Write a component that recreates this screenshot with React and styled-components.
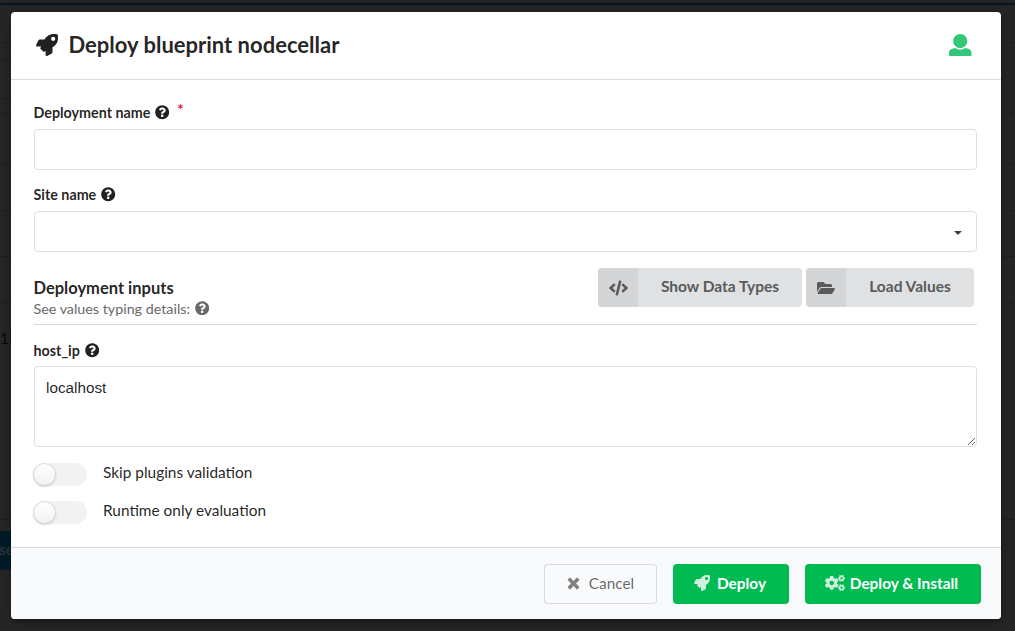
import React from "react";
import styled, { createGlobalStyle } from "styled-components";
import { FaQuestionCircle, FaFolderOpen, FaCogs } from "react-icons/fa";

const GlobalStyle = createGlobalStyle`
  *, *::before, *::after { box-sizing: border-box; }
  html, body { margin: 0; height: 100%; overflow: hidden; background: #242424; }
  body { font-family: Lato, "Open Sans", sans-serif; font-size: 15.4px; line-height: 21px; color: rgba(0,0,0,.87); }
`;

const Backdrop = styled.div`
  position: fixed;
  inset: 0;
  background: #262626;
  color: #060606;
`;
const TopBar = styled.div`
  height: 5px;
  background: #242424;
  border-bottom: 2px solid #03161e;
`;
const BackRow = styled.div`
  width: ${(p) => (p.$half ? "50%" : "100%")};
  height: ${(p) => p.$h}px;
  border-bottom: 1px solid #202020;
  line-height: 20px;
  padding-top: ${(p) => p.$top || 0}px;
`;
const BackButton = styled.div`
  width: 60px;
  height: 39px;
  margin-top: 11px;
  background: #001c28;
  color: #2b3438;
  font-weight: 700;
  line-height: 37px;
  text-indent: -1px;
`;

const Modal = styled.div`
  position: fixed;
  top: 12px;
  left: 11px;
  width: 990px;
  height: 607px;
  display: flex;
  flex-direction: column;
  background: #fff;
  border-radius: 4px;
  overflow: hidden;
  box-shadow: 1px 3px 3px 0 rgba(0,0,0,.2), 1px 3px 15px 2px rgba(0,0,0,.2);
`;
const Header = styled.header`
  height: 68px;
  display: flex;
  align-items: center;
  justify-content: space-between;
  padding: 0 29px 1px 25px;
  border-bottom: 1px solid #dbdcdd;
`;
const Title = styled.h1`
  display: flex;
  align-items: center;
  gap: 10.5px;
  margin: 0 0 1px;
  font-size: 22px;
  line-height: 27px;
  font-weight: 700;
`;
const Glyph = styled.svg`
  display: block;
  width: ${(p) => p.$w || p.$size}px;
  height: ${(p) => p.$size}px;
  fill: currentColor;
  opacity: ${(p) => p.$opacity || 1};
`;
const UserMark = styled.span`
  margin-right: 0.5px;
  color: #34c779;
`;
const Body = styled.main`
  flex: 1;
  padding: 21px 24px 0 23px;
`;
const Label = styled.label`
  display: flex;
  align-items: center;
  height: 23px;
  margin: 0 0 5px -0.5px;
  font-size: 14.3px;
  font-weight: 700;
  svg { margin-left: 5px; }
`;
const Required = styled.span`
  margin: -6px 0 0 7.5px;
  font-size: 15px;
  color: #e8123f;
`;
const Field = styled.div`
  height: 41px;
  margin-bottom: 13px;
  border: 1px solid #dededf;
  border-radius: 4px;
  display: flex;
  align-items: center;
  justify-content: flex-end;
  padding-right: 14.5px;
`;
const Caret = styled.span`
  border: 4.5px solid transparent;
  border-top-color: #404040;
  border-bottom: 0;
  margin-top: 2px;
`;
const InputsHeader = styled.section`
  display: flex;
  justify-content: space-between;
  height: 60px;
  padding: 3px 3px 0 0;
  margin-bottom: 14px;
  border-bottom: 1px solid #dbdcdd;
`;
const SectionTitle = styled.h2`
  margin: 10px 0 0 -0.5px;
  font-size: 16.5px;
  line-height: 21px;
  font-weight: 700;
`;
const Hint = styled.div`
  display: flex;
  align-items: center;
  gap: 5px;
  height: 20px;
  margin: -1px 0 0 -0.5px;
  font-size: 14.3px;
  color: #696969;
`;
const Tools = styled.div`
  display: flex;
  gap: 4px;
`;
const LabeledButton = styled.button`
  display: flex;
  width: ${(p) => p.$w}px;
  height: 39px;
  padding: 0;
  border: 0;
  border-radius: 4px;
  overflow: hidden;
  background: #e0e1e2;
  color: #5a5a5a;
  font: 700 15.5px/37px Lato, sans-serif;
`;
const IconCell = styled.span`
  width: 40px;
  height: 39px;
  display: flex;
  align-items: center;
  justify-content: center;
  background: #d4d5d6;
`;
const ButtonText = styled.span`
  flex: 1;
  text-align: center;
`;
const Area = styled.textarea`
  display: block;
  width: 100%;
  height: 81px;
  padding: 11px;
  margin: -1px 0 16px;
  border: 1px solid #dededf;
  border-radius: 4px;
  outline: 0;
  resize: vertical;
  color: rgba(0,0,0,.87);
  font: 15.3px/19.3px "Liberation Sans", Arial, sans-serif;
`;
const ToggleRow = styled.div`
  display: flex;
  height: 23px;
  margin-bottom: 15px;
  gap: 16px;
  line-height: 19px;
`;
const Track = styled.span`
  width: 54px;
  height: 23px;
  margin-left: -1px;
  border-radius: 12px;
  background: #f2f2f2;
`;
const Knob = styled.span`
  display: block;
  width: 23px;
  height: 23px;
  border-radius: 50%;
  background: #fff linear-gradient(transparent, rgba(0,0,0,.05));
  box-shadow: 0 1px 2px 0 rgba(34,36,38,.15), 0 0 0 1px rgba(34,36,38,.15) inset;
`;
const Footer = styled.footer`
  height: 72px;
  display: flex;
  justify-content: flex-end;
  gap: 16px;
  padding: 16px 20px 0 0;
  border-top: 1px solid #d7d8d9;
  background: #f9fafc;
`;
const Action = styled.button`
  display: flex;
  align-items: center;
  justify-content: center;
  width: ${(p) => p.$w}px;
  height: 40px;
  gap: ${(p) => p.$gap}px;
  padding: 0 ${(p) => p.$shift || 0}px 2px 0;
  border: 0;
  border-radius: 4px;
  font: 700 15.4px/20px Lato, sans-serif;
  background: #00bb52;
  color: #fff;
  ${(p) => p.$basic && `
    background: transparent;
    color: rgba(0,0,0,.6);
    font-weight: 400;
    box-shadow: 0 0 0 1px rgba(34,36,38,.15) inset;
  `}
`;

const Rocket = (props) => (
  <Glyph viewBox="0 0 512 512" {...props}>
    <path d="M505.1 19.1C503.8 13 499 8.2 492.9 6.9 460.7 0 435.5 0 410.4 0 307.2 0 245.3 55.2 199.1 128H94.9c-18.2 0-34.8 10.3-42.9 26.5L2.6 253.3c-8 16 3.6 34.7 21.5 34.7h95.1c-5.9 12.8-11.9 25.5-18 37.7-3.1 6.2-1.9 13.6 3 18.5l63.6 63.6c4.9 4.9 12.3 6.1 18.5 3 12.2-6.1 24.9-12 37.7-17.9V488c0 17.8 18.8 29.4 34.7 21.5l98.7-49.4c16.3-8.1 26.5-24.8 26.5-42.9V312.8c72.6-46.3 128-108.4 128-211.1.1-25.2.1-50.4-6.8-82.6zM400 160c-26.5 0-48-21.5-48-48s21.5-48 48-48 48 21.5 48 48-21.5 48-48 48z" />
  </Glyph>
);
const Person = (props) => (
  <Glyph viewBox="0 0 512 512" {...props}>
    <path d="M256 0c88.366 0 160 71.634 160 160s-71.634 160-160 160S96 248.366 96 160 167.634 0 256 0zm183.283 333.821l-71.313-17.828c-74.923 53.89-165.738 41.864-223.94 0l-71.313 17.828C29.981 344.505 0 382.903 0 426.955V464c0 26.51 21.49 48 48 48h416c26.51 0 48-21.49 48-48v-37.045c0-44.052-29.981-82.45-72.717-93.134z" />
  </Glyph>
);
const Cross = (props) => (
  <Glyph viewBox="0 0 14 14" {...props}>
    <path d="M3.6.9 7 4.3 10.4.9q.5-.5 1 0l1.7 1.7q.5.5 0 1L9.7 7l3.4 3.4q.5.5 0 1l-1.7 1.7q-.5.5-1 0L7 9.7l-3.4 3.4q-.5.5-1 0L.9 11.4q-.5-.5 0-1L4.3 7 .9 3.6q-.5-.5 0-1L2.6.9q.5-.5 1 0z" />
  </Glyph>
);
const Code = (props) => (
  <Glyph viewBox="0 0 19 16" {...props}>
    <path d="M5.8 4.2 1.7 8l4.1 3.8M13.2 4.2 17.3 8l-4.1 3.8M11.3.6 7.7 15.4" fill="none" stroke="currentColor" strokeWidth="2.5" />
  </Glyph>
);

const Toggle = ({ children }) => (
  <ToggleRow><Track><Knob /></Track><span>{children}</span></ToggleRow>
);

export default function App() {
  return (
    <>
      <GlobalStyle />
      <Backdrop>
        <TopBar />
        <BackRow $h={38} />
        <BackRow $h={18} $half />
        <BackRow $h={38} $half />
        <BackRow $h={15} />
        <BackRow $h={51} />
        <BackRow $h={46} />
        <BackRow $h={46} />
        <BackRow $h={46} />
        <BackRow $h={217} $top={25}>13</BackRow>
        <BackButton>se</BackButton>
      </Backdrop>
      <Modal>
        <Header>
          <Title><Rocket $size={22} />Deploy blueprint nodecellar</Title>
          <UserMark><Person $size={22.5} /></UserMark>
        </Header>
        <Body>
          <Label>Deployment name<FaQuestionCircle size={14.4} /><Required>*</Required></Label>
          <Field />
          <Label>Site name<FaQuestionCircle size={14.4} /></Label>
          <Field><Caret /></Field>
          <InputsHeader>
            <div>
              <SectionTitle>Deployment inputs</SectionTitle>
              <Hint>See values typing details:<FaQuestionCircle size={14.4} /></Hint>
            </div>
            <Tools>
              <LabeledButton $w={204}><IconCell><Code $w={19} $size={16} /></IconCell><ButtonText>Show Data Types</ButtonText></LabeledButton>
              <LabeledButton $w={168}><IconCell><FaFolderOpen size={18} /></IconCell><ButtonText>Load Values</ButtonText></LabeledButton>
            </Tools>
          </InputsHeader>
          <Label>host_ip<FaQuestionCircle size={14.4} /></Label>
          <Area defaultValue="localhost" />
          <Toggle>Skip plugins validation</Toggle>
          <Toggle>Runtime only evaluation</Toggle>
        </Body>
        <Footer>
          <Action $basic $w={113} $gap={9}><Cross $size={13} $opacity={0.8} />Cancel</Action>
          <Action $w={116} $gap={7} $shift={2}><Rocket $size={16} $opacity={0.8} />Deploy</Action>
          <Action $w={176} $gap={5} $shift={3}><FaCogs size={20} opacity={0.8} />Deploy &amp; Install</Action>
        </Footer>
      </Modal>
    </>
  );
}
